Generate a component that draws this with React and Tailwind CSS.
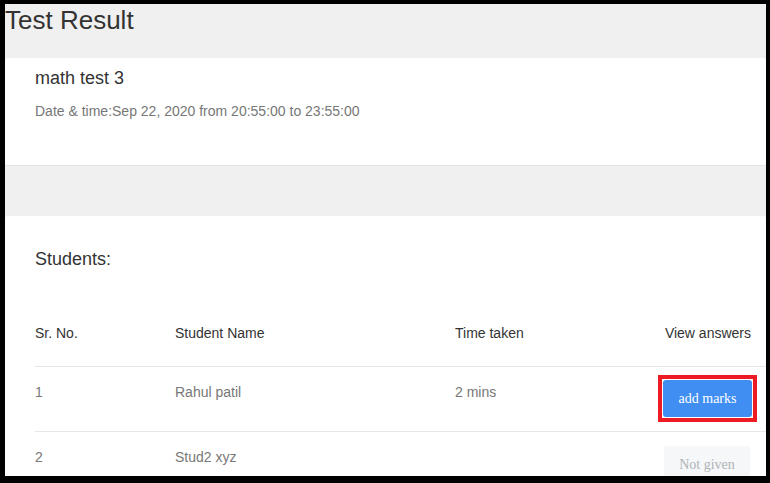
import React from 'react';

const students = [
  { no: 1, name: 'Rahul patil', time: '2 mins', marked: false },
  { no: 2, name: 'Stud2 xyz', time: '', marked: true },
];

export default function App() {
  return (
    <div className="w-[770px] h-[483px] bg-black pt-1 pl-[5px] pr-1 pb-[7px] overflow-hidden">
      <div className="h-full bg-[#f0f0f0] overflow-hidden font-['Liberation_Sans',Arial,sans-serif]">
        {/* page title */}
        <h1 className="h-[54px] text-[26px] leading-[32px] text-[#333]">Test Result</h1>

        {/* test info card */}
        <div className="h-[108px] bg-white rounded-[3px] border-b border-[#e2e2e2] pl-[30px]">
          <h2 className="pt-[8px] text-[18px] leading-[24px] text-[#333]">math test 3</h2>
          <p className="mt-[11px] text-[14px] leading-[20px] text-[#777]">
            Date &amp; time:Sep 22, 2020 from 20:55:00 to 23:55:00
          </p>
        </div>

        <div className="h-[50px]" />

        {/* students table */}
        <div className="bg-white rounded-[3px] pl-[30px] h-full">
          <h3 className="pt-[31px] text-[18px] leading-[24px] text-[#333]">Students:</h3>

          <div className="mt-[52px] h-[44px] flex border-b border-[#e4e8ea] text-[14px] leading-[20px] text-[#333]">
            <div className="w-[140px]">Sr. No.</div>
            <div className="w-[280px]">Student Name</div>
            <div className="flex-1">Time taken</div>
            <div className="pr-[15px]">View answers</div>
          </div>

          {students.map((s) => (
            <div
              key={s.no}
              className="h-[65px] flex items-start border-b border-[#e4e8ea] text-[14px] leading-[20px] text-[#777]"
            >
              <div className="w-[140px] pt-[15px]">{s.no}</div>
              <div className="w-[280px] pt-[15px]">{s.name}</div>
              <div className="flex-1 pt-[15px]">{s.time}</div>
              <div className={s.marked ? 'pr-[16px] pt-[14px]' : 'pr-[9px] pt-[8px]'}>
                {s.marked ? (
                  <button className="w-[86px] h-[37px] rounded-[3px] bg-[#f5f7f8] font-['Liberation_Serif',serif] text-[14px] text-[#b0b4b8]">
                    Not given
                  </button>
                ) : (
                  <span className="flex border-4 border-[#ed1c24] bg-white p-px">
                    <button className="w-[89px] h-[37px] rounded-[3px] bg-[#408ef2] font-['Liberation_Serif',serif] text-[14px] text-white">
                      add marks
                    </button>
                  </span>
                )}
              </div>
            </div>
          ))}
        </div>
      </div>
    </div>
  );
}
